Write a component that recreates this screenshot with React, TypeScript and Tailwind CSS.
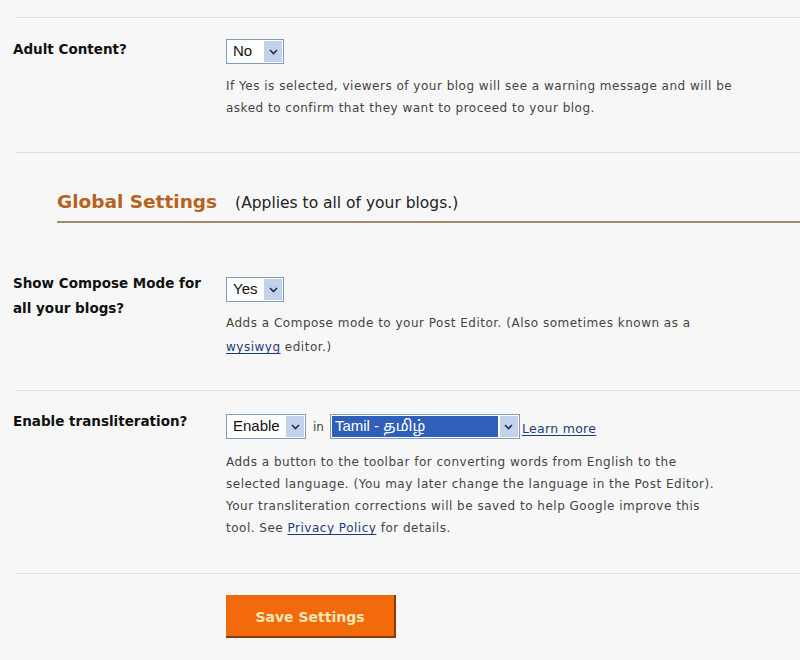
type SelectBoxProps = {
  value: string;
  width: string;
  highlighted?: boolean;
};

function Chevron() {
  return (
    <svg width="9" height="6" viewBox="0 0 9 6" fill="none">
      <path d="M1 1l3.5 3.5L8 1" stroke="#1f2f5c" strokeWidth="1.6" />
    </svg>
  );
}

function SelectBox({ value, width, highlighted }: SelectBoxProps) {
  return (
    <div
      className={`flex h-[25px] ${width} items-stretch border border-[#7f9db9] bg-white p-px font-['Liberation_Sans',Arial,sans-serif] text-[15px] text-[#111]`}
    >
      <div className="flex flex-1 items-center overflow-hidden">
        {highlighted ? (
          <span className="flex h-full w-full items-center bg-[#2f5fb8] pl-[3px] text-white font-['Liberation_Sans','Noto_Sans_Tamil','Noto_Sans',sans-serif]">
            {value}
          </span>
        ) : (
          <span className="pl-[5px]">{value}</span>
        )}
      </div>
      <div className="ml-[2px] flex w-[18px] items-center justify-center bg-[#c3d1ea]">
        <Chevron />
      </div>
    </div>
  );
}

function Separator() {
  return <div className="ml-[15px] border-t border-[#e1e1e1]" />;
}

export default function App() {
  const body = "font-['DejaVu_Sans',Verdana,sans-serif]";
  const desc = "w-[540px] text-[12px] tracking-[0.5px]";
  const link = "text-[#1f3a7a] underline underline-offset-2";

  return (
    <div className={`h-[660px] overflow-hidden bg-[#f7f7f7] ${body} text-[#444]`}>
      <div className="h-[17px]" />
      <Separator />

      {/* Adult content */}
      <div className="flex pb-[33px] pt-[21px]">
        <div className="w-[226px] pl-[13px] text-[13.5px] font-bold leading-[20px] text-[#111]">
          Adult Content?
        </div>
        <div>
          <SelectBox value="No" width="w-[58px]" />
          <p className={`mt-[11px] leading-[22px] ${desc}`}>
            If Yes is selected, viewers of your blog will see a warning message and will be
            <br />
            asked to confirm that they want to proceed to your blog.
          </p>
        </div>
      </div>

      <Separator />

      {/* Global settings heading */}
      <div className="ml-[57px] flex items-baseline border-b-2 border-[#a08b6a] pb-[5px] pt-[35px]">
        <h2 className="text-[18.5px] font-bold leading-[28px] text-[#b5631f]">Global Settings</h2>
        <span className="ml-[18px] text-[15.5px] text-[#222]">(Applies to all of your blogs.)</span>
      </div>

      {/* Compose mode */}
      <div className="flex pb-[31px] pt-[48px]">
        <div className="w-[226px] pl-[13px] text-[13.5px] font-bold leading-[25px] text-[#111]">
          Show Compose Mode for
          <br />
          all your blogs?
        </div>
        <div className="pt-[6px]">
          <SelectBox value="Yes" width="w-[58px]" />
          <p className={`mt-[9px] leading-[24px] ${desc}`}>
            Adds a Compose mode to your Post Editor. (Also sometimes known as a
            <br />
            <a className={link}>wysiwyg</a> editor.)
          </p>
        </div>
      </div>

      <Separator />

      {/* Transliteration */}
      <div className="flex pb-[34px] pt-[20px]">
        <div className="w-[226px] pl-[13px] text-[13.5px] font-bold leading-[20px] text-[#111]">
          Enable transliteration?
        </div>
        <div className="pt-[3px]">
          <div className="flex items-center">
            <SelectBox value="Enable" width="w-[80px]" />
            <span className="ml-[7px] mr-[6px] text-[12px] text-[#444]">in</span>
            <SelectBox value="Tamil - தமிழ்" width="w-[190px]" highlighted />
            <a className={`ml-[2px] mt-[6px] text-[12.5px] tracking-[0.3px] ${link}`}>Learn more</a>
          </div>
          <p className={`mt-[12px] leading-[22px] ${desc}`}>
            Adds a button to the toolbar for converting words from English to the
            <br />
            selected language. (You may later change the language in the Post Editor).
            <br />
            Your transliteration corrections will be saved to help Google improve this
            <br />
            tool. See <a className={link}>Privacy Policy</a> for details.
          </p>
        </div>
      </div>

      <Separator />

      <div className="pl-[226px] pt-[21px]">
        <button
          type="button"
          className="h-[43px] w-[170px] border-b-2 border-r-2 border-[#8b3a06] bg-[#f26a0c] pt-[3px] text-[14px] font-bold text-[#fbe7b4]"
        >
          Save Settings
        </button>
      </div>
    </div>
  );
}
